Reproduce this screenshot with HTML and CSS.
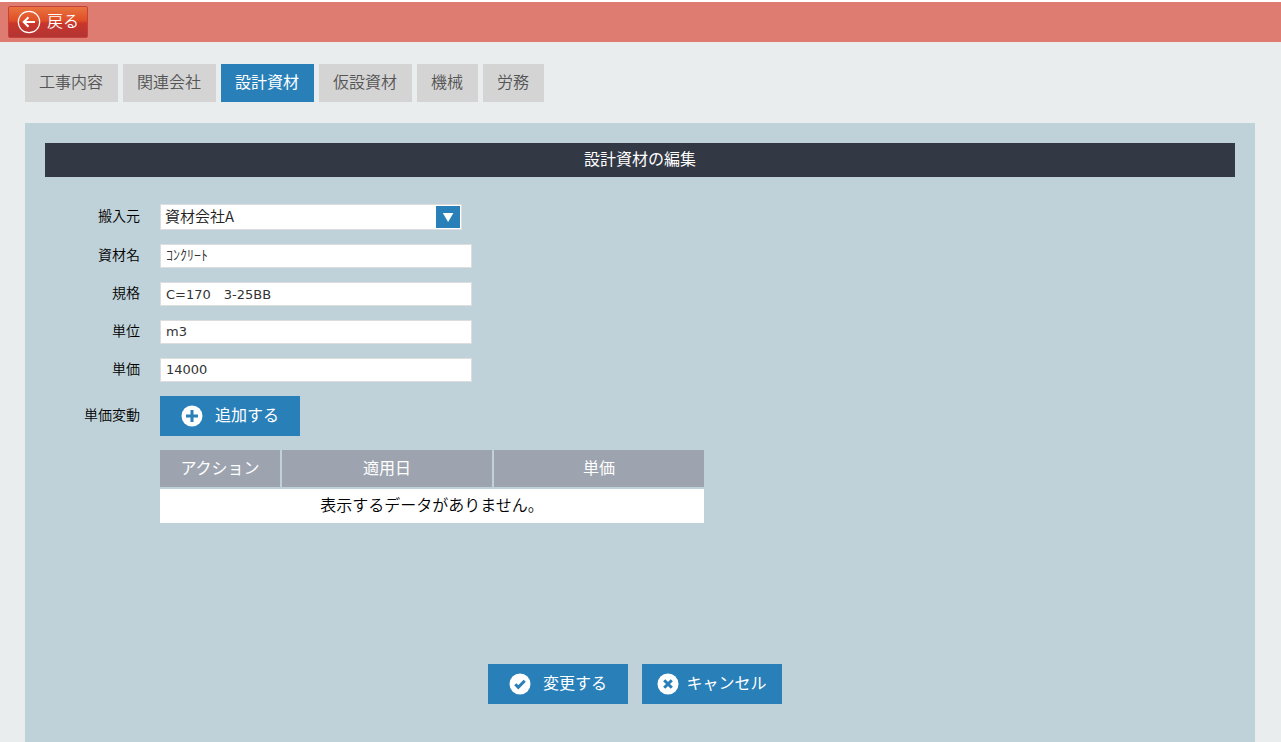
FILE: index.html
```
<!DOCTYPE html>
<html lang="ja">
<head>
<meta charset="utf-8">
<title>設計資材の編集</title>
<link rel="stylesheet" href="styles.css">
</head>
<body>
<header class="topbar">
  <button type="button" class="back">
    <svg class="back-icon" viewBox="0 0 24 24" aria-hidden="true"><circle cx="12" cy="12" r="10.7"/><path d="M18 12H7M11.500 7.200L6.700 12L11.500 16.800"/></svg>
    <span>戻る</span>
  </button>
</header>
<nav class="tabs">
  <a class="tab" href="#construction">工事内容</a>
  <a class="tab" href="#companies">関連会社</a>
  <a class="tab tab-active" href="#materials" aria-current="page">設計資材</a>
  <a class="tab" href="#temporary">仮設資材</a>
  <a class="tab" href="#machines">機械</a>
  <a class="tab" href="#labor">労務</a>
</nav>
<main class="panel">
  <h1 class="title">設計資材の編集</h1>
  <form>
    <div class="fields">
      <label for="supplier">搬入元</label>
      <div class="select-box">
        <select id="supplier" class="select"><option>資材会社A</option></select>
        <span class="select-arrow" aria-hidden="true"><svg viewBox="0 0 24 22"><path d="M6.800 7h10.600L12.100 16z"/></svg></span>
      </div>
      <label for="name">資材名</label>
      <input id="name" class="text kana" type="text" value="ｺﾝｸﾘｰﾄ">
      <label for="spec">規格</label>
      <input id="spec" class="text" type="text" value="C=170　3-25BB">
      <label for="unit">単位</label>
      <input id="unit" class="text" type="text" value="m3">
      <label for="price">単価</label>
      <input id="price" class="text" type="text" value="14000">
      <label for="add">単価変動</label>
      <button id="add" type="button" class="button">
        <svg class="icon" viewBox="0 0 22 22" aria-hidden="true"><circle cx="11" cy="11" r="10.500"/><path d="M11 5v12M5 11h12"/></svg>
        <span>追加する</span>
      </button>
      <table class="table">
        <thead><tr><th class="col-action">アクション</th><th>適用日</th><th>単価</th></tr></thead>
        <tbody><tr><td colspan="3">表示するデータがありません。</td></tr></tbody>
      </table>
    </div>
    <div class="actions">
      <button type="submit" class="button">
        <svg class="icon" viewBox="0 0 22 22" aria-hidden="true"><circle cx="11" cy="11" r="10.500"/><path d="M6.300 11.300l3 3L15.700 7.800"/></svg>
        <span>変更する</span>
      </button>
      <button type="button" class="button button-tight">
        <svg class="icon" viewBox="0 0 22 22" aria-hidden="true"><circle cx="11" cy="11" r="10.500"/><path d="M7.200 7.200l7.600 7.600M14.800 7.200l-7.600 7.600"/></svg>
        <span>キャンセル</span>
      </button>
    </div>
  </form>
</main>
</body>
</html>
```

FILE: styles.css
```
* {
  box-sizing: border-box;
}

body {
  display: flex;
  flex-direction: column;
  min-height: 100vh;
  margin: 0;
  border-top: 2px solid #fff;
  background: #e9edee;
  color: #000;
  font-family: "Noto Sans CJK JP", sans-serif;
  font-size: 16px;
  font-weight: 350;
}

button,
input,
select {
  margin: 0;
  font: inherit;
}

.topbar {
  display: flex;
  align-items: center;
  height: 40px;
  padding: 0 8px;
  background: #de7c71;
}

.back {
  display: flex;
  align-items: center;
  justify-content: center;
  gap: 6px;
  width: 80px;
  height: 32px;
  padding: 0;
  border: 1px solid #c8403a;
  border-radius: 2px;
  background: linear-gradient(#e8743f 0%, #e04e28 45%, #c8362c 55%, #b23434 100%);
  color: #fff;
  line-height: 24px;
}

.back-icon {
  width: 24px;
  height: 24px;
  fill: none;
  stroke: #fff;
  stroke-width: 1.2;
}

.back-icon path {
  stroke-width: 2;
}

.tabs {
  display: flex;
  gap: 5px;
  padding: 22px 25px 21px;
}

.tab {
  height: 38px;
  padding: 0 15px 0 14px;
  background: #d4d4d4;
  color: #555;
  line-height: 34px;
  text-decoration: none;
}

.tab-active {
  background: #2980b9;
  color: #fff;
  font-weight: 400;
}

.panel {
  flex: 1;
  margin: 0 26px 0 25px;
  padding: 20px 20px 38px;
  background: #c0d2d9;
}

.title {
  height: 34px;
  margin: 0 0 27px;
  background: #323844;
  color: #fff;
  font-size: 16px;
  font-weight: 400;
  line-height: 30px;
  text-align: center;
}

.fields {
  display: grid;
  grid-template-columns: 95px 1fr;
  align-items: center;
  justify-items: start;
  gap: 14px 20px;
}

.fields label {
  justify-self: end;
  padding-bottom: 4px;
  font-size: 14px;
  line-height: 20px;
}

.select-box {
  position: relative;
  width: 302px;
  height: 26px;
}

.select {
  display: block;
  width: 100%;
  height: 100%;
  padding: 0 26px 4px 4px;
  border: 1px solid #ddd;
  border-radius: 0;
  appearance: none;
  background: #fff;
  color: #222;
  font-size: 15px;
}

.select-arrow {
  position: absolute;
  top: 2px;
  right: 2px;
  width: 24px;
  height: 22px;
  background: #2980b9;
  fill: #fff;
  pointer-events: none;
}

.select-arrow svg {
  display: block;
}

.text {
  width: 312px;
  height: 24px;
  padding: 0 5px 2px;
  border: 1px solid #ddd;
  background: #fff;
  color: #333;
  font-family: "DejaVu Sans", "Noto Sans CJK JP", sans-serif;
  font-size: 13px;
  font-weight: 400;
}

.kana {
  padding-bottom: 4px;
  font-family: "Noto Sans CJK JP", sans-serif;
  font-size: 14px;
  font-weight: 350;
}

.button {
  display: flex;
  align-items: center;
  justify-content: center;
  gap: 12px;
  width: 140px;
  height: 40px;
  padding: 0;
  border: 0;
  background: #2980b9;
  color: #fff;
  font-weight: 400;
  line-height: 24px;
}

.button span,
.back span {
  padding-bottom: 4px;
}

.button-tight {
  gap: 7px;
}

.icon {
  width: 22px;
  height: 22px;
  fill: #fff;
}

.icon path {
  fill: none;
  stroke: #2980b9;
  stroke-width: 3;
}

.table {
  grid-column: 2;
  width: 544px;
  border-spacing: 0;
  table-layout: fixed;
}

.table th {
  height: 37px;
  padding: 0 0 4px;
  background: #9da4af;
  color: #fff;
  font-weight: 400;
  line-height: 24px;
}

.table th + th {
  border-left: 2px solid #c0d2d9;
}

.col-action {
  width: 120px;
}

.table td {
  height: 36px;
  padding: 0 0 4px;
  border-top: 2px solid #c0d2d9;
  background: #fff;
  line-height: 24px;
  text-align: center;
}

.actions {
  display: flex;
  justify-content: center;
  gap: 14px;
  margin-top: 141px;
  padding-right: 10px;
}
```
